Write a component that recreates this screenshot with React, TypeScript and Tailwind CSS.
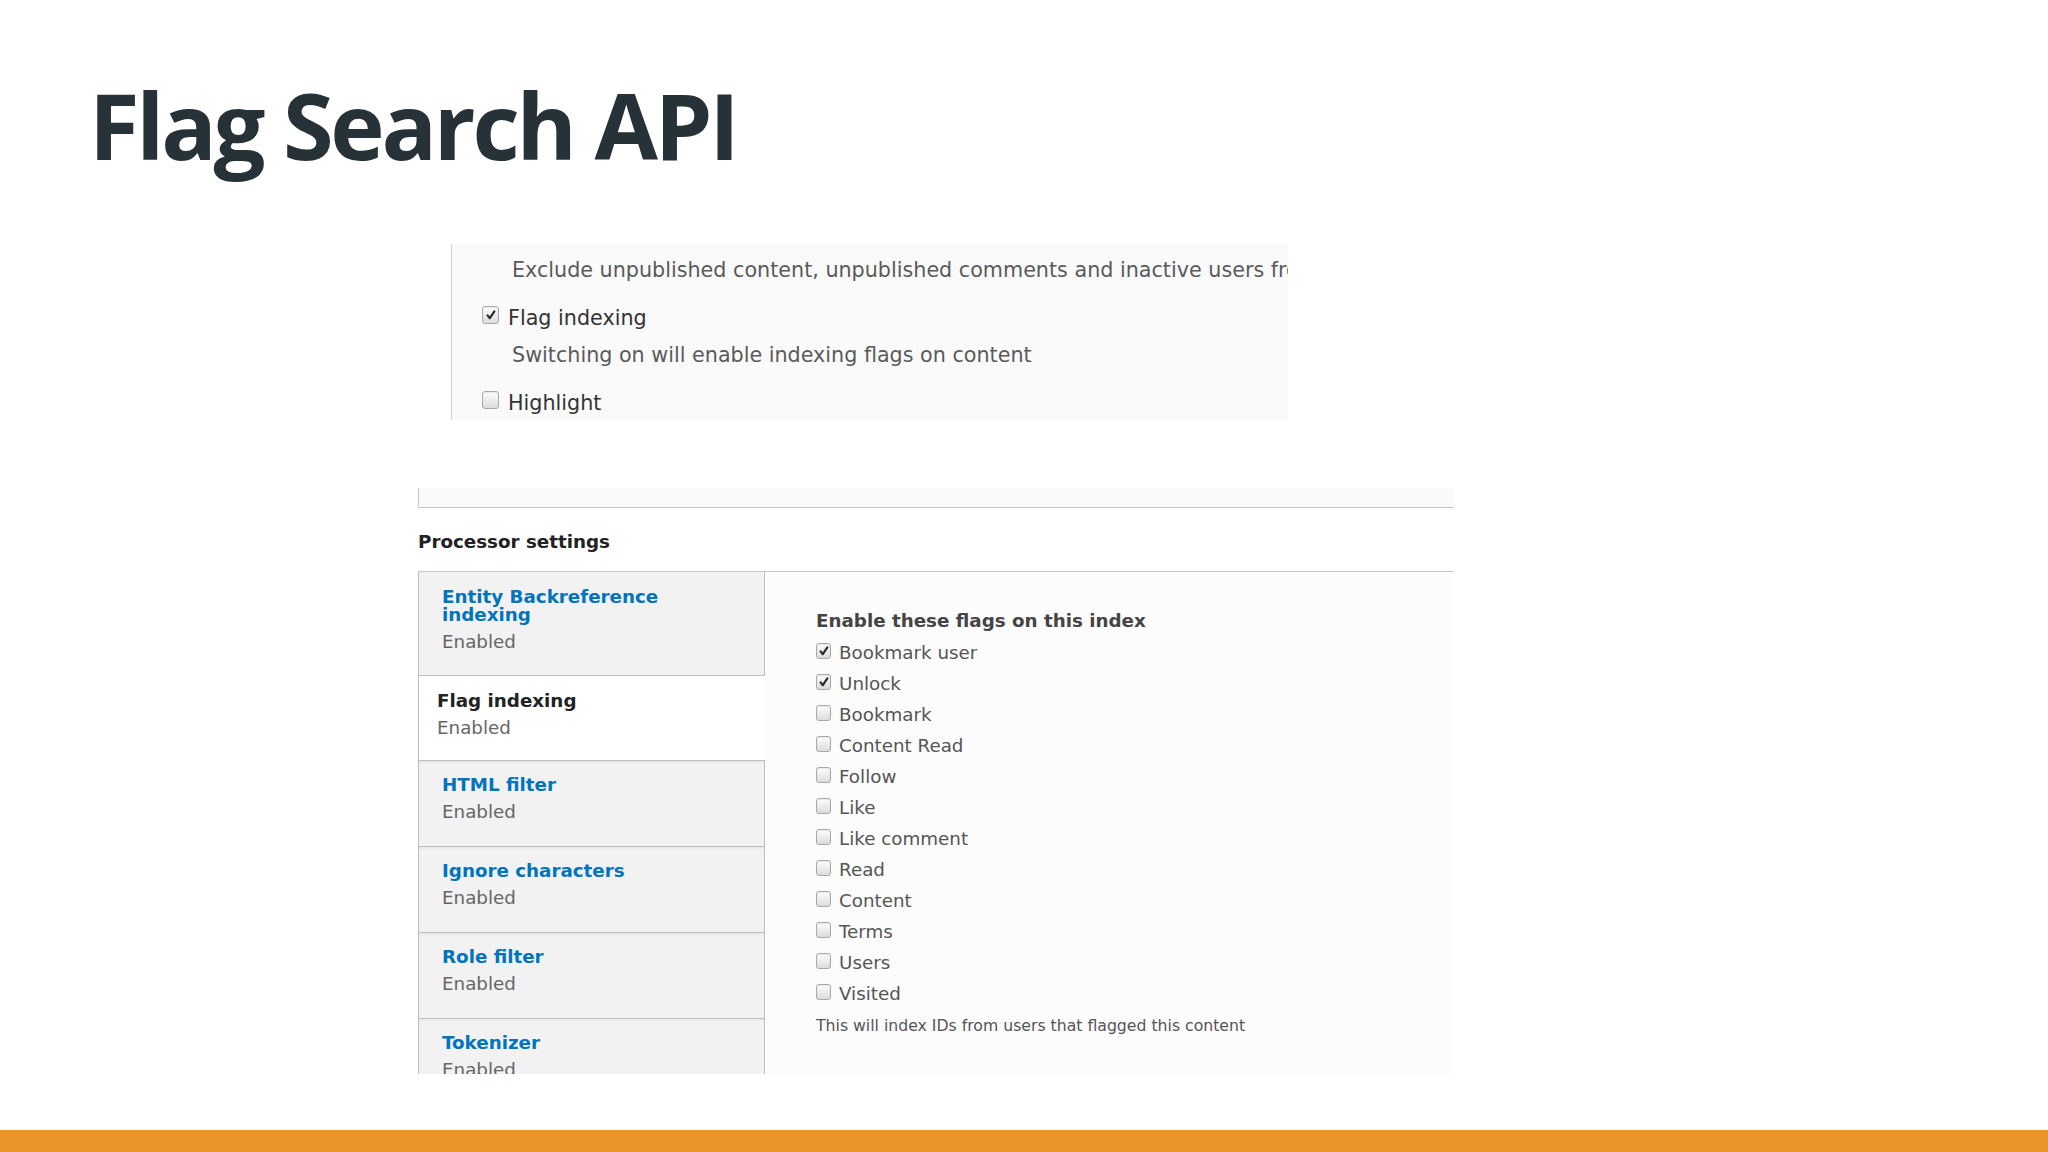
const flags: [string, boolean][] = [
  ["Bookmark user", true],
  ["Unlock", true],
  ["Bookmark", false],
  ["Content Read", false],
  ["Follow", false],
  ["Like", false],
  ["Like comment", false],
  ["Read", false],
  ["Content", false],
  ["Terms", false],
  ["Users", false],
  ["Visited", false],
];

const tabs = [
  { title: "HTML filter" },
  { title: "Ignore characters" },
  { title: "Role filter" },
  { title: "Tokenizer" },
];

function Checkbox({ checked, size = "sm" }: { checked: boolean; size?: "sm" | "md" }) {
  const box =
    size === "md" ? "h-[18px] w-[17px] -translate-y-[3px]" : "h-[16px] w-[15px] -translate-y-[2px]";
  return (
    <span
      className={`${box} relative inline-flex shrink-0 items-center justify-center rounded-[3px] border border-[#a8a8a8] bg-linear-to-b from-[#fdfdfd] to-[#dcdcdc] shadow-[inset_0_1px_1px_rgba(0,0,0,0.08)]`}
    >
      {checked && (
        <svg viewBox="0 0 12 12" className="h-[12px] w-[12px]" aria-hidden="true">
          <path d="M2.6 6.4 L4.8 9.2 L9.4 2.4" fill="none" stroke="#2b2b2b" strokeWidth="2.2" strokeLinecap="round" strokeLinejoin="round" />
        </svg>
      )}
    </span>
  );
}

export default function App() {
  return (
    <div className="relative flex h-[1152px] w-[2048px] flex-col overflow-hidden bg-white font-['DejaVu_Sans',sans-serif]">
      <h1 className="ml-[89px] mt-[79px] font-['Open_Sans',sans-serif] text-[92px] font-bold leading-none tracking-[-0.035em] text-[#263238]">
        Flag Search API
      </h1>

      {/* search api options fragment */}
      <div className="ml-[451px] mt-[73px] h-[176px] w-[837px] overflow-hidden border-l border-[#cfcfcf] bg-[#fafafa] text-[20.7px]">
        <p className="ml-[60px] whitespace-nowrap pt-[13px] leading-[26px] text-[#5a5a5a]">
          Exclude unpublished content, unpublished comments and inactive users from
        </p>
        <label className="ml-[30px] mt-[22px] flex items-center gap-[9px] leading-[26px] text-[#333]">
          <Checkbox checked size="md" />
          Flag indexing
        </label>
        <p className="ml-[60px] mt-[11px] leading-[26px] text-[#5a5a5a]">
          Switching on will enable indexing flags on content
        </p>
        <label className="ml-[30px] mt-[22px] flex items-center gap-[9px] leading-[26px] text-[#333]">
          <Checkbox checked={false} size="md" />
          Highlight
        </label>
      </div>

      <div className="ml-[418px] mt-[68px] h-[20px] w-[1036px] border-b border-l border-[#c6c6c6] bg-[#fafafa]" />

      <h2 className="ml-[418px] mt-[23px] text-[18.3px] font-bold leading-[22px] text-[#222]">
        Processor settings
      </h2>

      <div className="ml-[418px] mt-[18px] flex h-[503px] w-[1036px] overflow-hidden border-t border-[#c6c6c6]">
        <ul className="w-[347px] shrink-0 border-l border-[#bdbdbd] text-[18.3px]">
          <li className="h-[104px] border-b border-r border-[#bdbdbd] bg-[#f2f2f2] pl-[23px] pt-[16px]">
            <div className="font-bold leading-[18px] text-[#0074bd]">
              Entity Backreference
              <br />
              indexing
            </div>
            <div className="mt-[7px] leading-[22px] text-[#666]">Enabled</div>
          </li>
          <li className="h-[85px] border-b border-[#bdbdbd] bg-white pl-[18px] pt-[14px]">
            <div className="font-bold leading-[22px] text-[#222]">Flag indexing</div>
            <div className="mt-[5px] leading-[22px] text-[#666]">Enabled</div>
          </li>
          {tabs.map((t) => (
            <li
              key={t.title}
              className="h-[86px] border-b border-r border-[#bdbdbd] bg-[#f2f2f2] pl-[23px] pt-[13px] shadow-[inset_0_2px_2px_rgba(0,0,0,0.04)]"
            >
              <div className="font-bold leading-[22px] text-[#0074bd]">{t.title}</div>
              <div className="mt-[5px] leading-[22px] text-[#666]">Enabled</div>
            </li>
          ))}
        </ul>

        <div className="flex-1 bg-[#fcfcfc] pl-[51px] pt-[38px]">
          <div className="text-[18.3px] font-bold leading-[22px] text-[#444]">
            Enable these flags on this index
          </div>
          <div className="mt-[5px] flex flex-col">
            {flags.map(([name, on]) => (
              <label key={name} className="flex h-[31px] items-center gap-[8px] text-[18.3px] text-[#555]">
                <Checkbox checked={on} />
                {name}
              </label>
            ))}
          </div>
          <p className="mt-[7px] text-[15.7px] leading-[20px] text-[#555]">
            This will index IDs from users that flagged this content
          </p>
        </div>
      </div>

      <div className="mt-auto h-[22px] w-full bg-[#e8962a]" />
    </div>
  );
}
